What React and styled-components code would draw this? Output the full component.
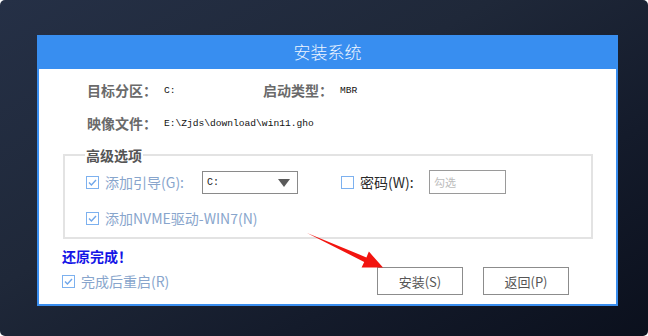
import React from "react";
import styled, { createGlobalStyle } from "styled-components";

const GlobalStyle = createGlobalStyle`
  html, body {
    margin: 0;
    padding: 0;
    background: #fff;
  }
  body {
    font-family: "Noto Sans CJK SC", "Noto Sans", sans-serif;
  }
`;

const cjk = `"Noto Sans CJK SC", "Noto Sans", sans-serif`;
const mono = `"Liberation Mono", "DejaVu Sans Mono", monospace`;

export default function App() {
  return (
    <>
      <GlobalStyle />
      <Screen>
        <Dialog>
          <Header>安装系统</Header>
          <Body>
            <InfoRow>
              <InfoLabel>目标分区：</InfoLabel>
              <InfoValue $w={99}>C:</InfoValue>
              <InfoLabel>启动类型：</InfoLabel>
              <InfoValue>MBR</InfoValue>
            </InfoRow>
            <InfoRow $top={11}>
              <InfoLabel>映像文件：</InfoLabel>
              <InfoValue>E:\Zjds\download\win11.gho</InfoValue>
            </InfoRow>

            <Group>
              <Legend>高级选项</Legend>
              <GroupRow $top={7}>
                <CheckItem $w={116}>
                  <Check checked />
                  <CheckText>添加引导(G):</CheckText>
                </CheckItem>
                <Select>
                  C:
                  <Caret />
                </Select>
                <CheckItem $w={88} $left={43}>
                  <Check />
                  <CheckText $dark>密码(W):</CheckText>
                </CheckItem>
                <TextBox placeholder="勾选" readOnly />
              </GroupRow>
              <GroupRow $top={13} $h={22}>
                <CheckItem>
                  <Check checked />
                  <CheckText>添加NVME驱动-WIN7(N)</CheckText>
                </CheckItem>
              </GroupRow>
            </Group>

            <Status>还原完成！</Status>
            <Footer>
              <CheckItem>
                <Check checked />
                <CheckText>完成后重启(R)</CheckText>
              </CheckItem>
              <Buttons>
                <Button>安装(S)</Button>
                <Button>返回(P)</Button>
              </Buttons>
            </Footer>
          </Body>
        </Dialog>
        <Arrow width="648" height="336" viewBox="0 0 648 336">
          <polygon
            points="307,233 366.4,257.4 368.9,251.6 383,267.5 361.6,267.4 364.2,261.9"
            fill="#f2140f"
          />
        </Arrow>
      </Screen>
    </>
  );
}

function Check({ checked }) {
  return (
    <Box>
      {checked && (
        <svg width="11" height="11" viewBox="0 0 11 11">
          <path
            d="M2 5.6 L4.4 8 L9 3"
            fill="none"
            stroke="#6fa6ea"
            strokeWidth="1.4"
          />
        </svg>
      )}
    </Box>
  );
}

const Screen = styled.div`
  position: relative;
  width: 648px;
  height: 336px;
  box-sizing: border-box;
  padding: 35px 0 0 37px;
  border-radius: 5px;
  overflow: hidden;
  background: linear-gradient(150deg, #253046 0%, #1f2839 40%, #141b2b 70%, #0b101d 100%);
`;

const Dialog = styled.div`
  width: 581px;
  height: 271px;
  box-sizing: border-box;
  border: 2px solid #3a8eef;
  border-top: none;
  background: #fff;
  display: flex;
  flex-direction: column;
`;

const Header = styled.div`
  height: 34px;
  margin: 0 -2px;
  background: #388ef0;
  color: #eef5ff;
  font-family: ${cjk};
  font-size: 17px;
  font-weight: 300;
  line-height: 34px;
  text-align: center;
`;

const Body = styled.div`
  display: flex;
  flex-direction: column;
  padding-top: 10px;
`;

const InfoRow = styled.div`
  display: flex;
  align-items: center;
  height: 22px;
  margin-top: ${(p) => p.$top || 0}px;
  padding-left: 48px;
`;

const InfoLabel = styled.span`
  width: 77px;
  font-family: ${cjk};
  font-size: 14px;
  font-weight: 700;
  color: #6a6a6a;
  white-space: nowrap;
`;

const InfoValue = styled.span`
  width: ${(p) => (p.$w ? `${p.$w}px` : "auto")};
  font-family: ${mono};
  font-size: 9.6px;
  color: #111;
  white-space: nowrap;
`;

const Group = styled.fieldset`
  margin: 13px 0 0 24px;
  width: 530px;
  box-sizing: border-box;
  border: 2px solid #e3e3e3;
  padding: 0 0 8px 21px;
  display: flex;
  flex-direction: column;
`;

const Legend = styled.legend`
  padding: 0 1px;
  margin-left: -1px;
  font-family: ${cjk};
  font-size: 14px;
  line-height: 16px;
  font-weight: 700;
  color: #555;
`;

const GroupRow = styled.div`
  display: flex;
  align-items: center;
  height: ${(p) => p.$h || 24}px;
  margin-top: ${(p) => p.$top || 0}px;
`;

const CheckItem = styled.div`
  display: flex;
  align-items: center;
  gap: 6px;
  width: ${(p) => (p.$w ? `${p.$w}px` : "auto")};
  margin-left: ${(p) => p.$left || 0}px;
  flex-shrink: 0;
`;

const Box = styled.span`
  width: 13px;
  height: 13px;
  box-sizing: border-box;
  border: 1px solid #7db1ef;
  background: #fff;
  display: flex;
  align-items: center;
  justify-content: center;
`;

const CheckText = styled.span`
  font-family: ${cjk};
  font-size: 14px;
  line-height: 16px;
  color: ${(p) => (p.$dark ? "#2a2a2a" : "#88a5cc")};
  font-weight: 400;
  white-space: nowrap;
`;

const Select = styled.div`
  position: relative;
  width: 96px;
  height: 23px;
  box-sizing: border-box;
  border: 1px solid #8a8a8a;
  padding-left: 4px;
  display: flex;
  align-items: center;
  font-family: ${mono};
  font-size: 10px;
  color: #222;
`;

const Caret = styled.span`
  position: absolute;
  right: 7px;
  top: 7px;
  width: 0;
  height: 0;
  border-left: 6px solid transparent;
  border-right: 6px solid transparent;
  border-top: 8px solid #5a5a5a;
`;

const TextBox = styled.input`
  width: 77px;
  height: 24px;
  box-sizing: border-box;
  margin: 0;
  border: 1px solid #9a9a9a;
  padding: 0 4px;
  outline: none;
  font-family: ${cjk};
  font-size: 11px;
  &::placeholder {
    color: #bcbcbc;
  }
`;

const Status = styled.div`
  margin: 9px 0 0 23px;
  font-family: ${cjk};
  font-size: 14px;
  line-height: 16px;
  font-weight: 700;
  color: #1414e6;
`;

const Footer = styled.div`
  display: flex;
  align-items: center;
  justify-content: space-between;
  margin: 3px 47px 0 23px;
  height: 28px;
`;

const Buttons = styled.div`
  display: flex;
  gap: 20px;
`;

const Button = styled.button`
  width: 86px;
  height: 28px;
  margin: 0;
  padding: 0;
  border: 1px solid #8c8c8c;
  background: #fff;
  font-family: ${cjk};
  font-size: 13px;
  color: #555;
`;

const Arrow = styled.svg`
  position: absolute;
  left: 0;
  top: 0;
  pointer-events: none;
`;
